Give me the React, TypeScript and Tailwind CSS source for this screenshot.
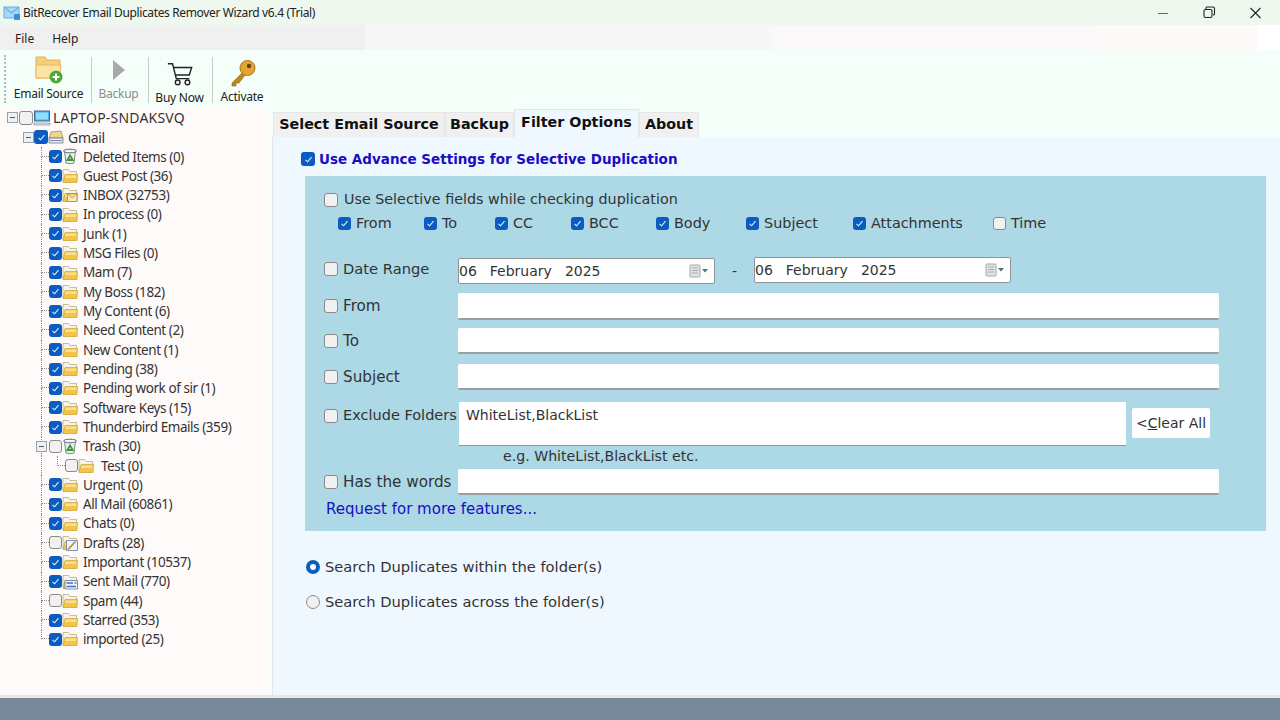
import React from "react";

const sans = "font-['Noto_Sans',sans-serif]";
const dejavu = "font-['DejaVu_Sans',sans-serif]";

function Check({ on, big }: { on?: boolean; big?: boolean }) {
  const size = big ? "w-[14px] h-[14px]" : "w-[13px] h-[13px]";
  if (on) {
    return (
      <span className={`${size} shrink-0 rounded-[3px] bg-[#0b5cc0] flex items-center justify-center`}>
        <svg width="9" height="9" viewBox="0 0 9 9" fill="none" stroke="#e8f0fa" strokeWidth="1.1">
          <path d="M1.5 4.8 L3.6 6.8 L7.5 2.2" />
        </svg>
      </span>
    );
  }
  return <span className={`${size} block shrink-0 rounded-[3px] bg-[#f1f1f1] border-[1.5px] border-[#8a8a8a]`} />;
}

function Folder({ kind }: { kind?: string }) {
  if (kind === "trash") {
    return (
      <svg width="16" height="17" viewBox="0 0 16 17" className="shrink-0">
        <path d="M2.5 3.5 L13.5 2.5 L12 15 Q8 16.5 4 15 Z" fill="#e9eeee" stroke="#7d8a8c" />
        <ellipse cx="8" cy="3" rx="6.5" ry="1.8" fill="#f6f8f8" stroke="#5f6c6e" />
        <path d="M8 7.5 L10.8 12 L5.4 12 Z" fill="none" stroke="#3c9a3a" strokeWidth="1.8" />
      </svg>
    );
  }
  return (
    <svg width="16" height="16" viewBox="0 0 16 16" className="shrink-0">
      <path d="M1 1.5 L6.5 1.5 L8 3.5 L14.5 3.5 L14.5 14 L1 14 Z" fill="#f7f3e6" stroke="#b9ac84" strokeWidth="0.8" />
      <path d="M1 14.5 L3 6.5 L15.5 6.5 L15 14.5 Z" fill="#f3c547" stroke="#c79a2c" strokeWidth="0.6" />
      <path d="M3.5 7.5 L14.5 7.5 L14 10 L3 10 Z" fill="#fae08f" />
      {kind === "inbox" && <path d="M5.5 6.5 L15 6.5 L15 14.5 L5.5 14.5 Z M5.5 6.5 L10.2 11 L15 6.5" fill="#f9ebc0" stroke="#b8842c" strokeWidth="0.8" />}
      {kind === "drafts" && (
        <g>
          <path d="M4.5 5.5 L15.5 5.5 L15.5 15.5 L4.5 15.5 Z" fill="#eef5ff" stroke="#5b7fb5" strokeWidth="0.8" />
          <path d="M6 14.5 L13.5 6.5" stroke="#c88a2a" strokeWidth="1.8" />
        </g>
      )}
      {kind === "sent" && (
        <g>
          <path d="M3 6.5 L15.5 6.5 L15.5 15 L3 15 Z" fill="#f2f6fc" stroke="#5a78ad" strokeWidth="0.8" />
          <path d="M4.5 9 L11 9 M4.5 12.5 L14 12.5" stroke="#3f6fc4" strokeWidth="1.4" />
          <path d="M12.5 8 L14.5 8 L14.5 10 L12.5 10 Z" fill="#d98a3a" />
        </g>
      )}
    </svg>
  );
}

function Connector({ last }: { last?: boolean }) {
  return (
    <span className="w-[8px] self-stretch flex flex-col shrink-0">
      <span className="h-1/2 border-l border-b border-dotted border-[#8d8d8d]" />
      <span className={`h-1/2 ${last ? "" : "border-l border-dotted border-[#8d8d8d]"}`} />
    </span>
  );
}

function Expander() {
  return (
    <span className="w-[11px] h-[11px] shrink-0 border border-[#9aa0a8] bg-[#eef0f3] flex items-center justify-center">
      <span className="w-[5px] h-px bg-[#4a5a78]" />
    </span>
  );
}

type Item = { label: string; on?: boolean; kind?: string; child?: boolean; exp?: boolean };

const items: Item[] = [
  { label: "Deleted Items (0)", on: true, kind: "trash" },
  { label: "Guest Post (36)", on: true },
  { label: "INBOX (32753)", on: true, kind: "inbox" },
  { label: "In process (0)", on: true },
  { label: "Junk (1)", on: true },
  { label: "MSG Files (0)", on: true },
  { label: "Mam (7)", on: true },
  { label: "My Boss (182)", on: true },
  { label: "My Content (6)", on: true },
  { label: "Need Content (2)", on: true },
  { label: "New Content (1)", on: true },
  { label: "Pending (38)", on: true },
  { label: "Pending work of sir (1)", on: true },
  { label: "Software Keys (15)", on: true },
  { label: "Thunderbird Emails (359)", on: true },
  { label: "Trash (30)", kind: "trash", exp: true },
  { label: "Test (0)", child: true },
  { label: "Urgent (0)", on: true },
  { label: "All Mail (60861)", on: true },
  { label: "Chats (0)", on: true },
  { label: "Drafts (28)", kind: "drafts" },
  { label: "Important (10537)", on: true },
  { label: "Sent Mail (770)", on: true, kind: "sent" },
  { label: "Spam (44)" },
  { label: "Starred (353)", on: true },
  { label: "imported (25)", on: true },
];

const treeText = "text-[13.5px] tracking-[-0.44px] text-[#333] whitespace-nowrap";

function TreeRow({ item, last }: { item: Item; last: boolean }) {
  if (item.child) {
    return (
      <div className="h-[19.32px] flex items-center">
        <span className="w-[41px] shrink-0" />
        <span className="w-[16px] shrink-0 self-stretch border-l border-dotted border-[#8d8d8d]" />
        <span className="w-[8px] shrink-0 self-stretch flex flex-col">
          <span className="h-1/2 border-l border-b border-dotted border-[#8d8d8d]" />
        </span>
        <Check />
        <Folder />
        <span className={`ml-[7px] ${treeText}`}>{item.label}</span>
      </div>
    );
  }
  return (
    <div className="h-[19.32px] flex items-center">
      <span className="w-[41px] shrink-0" />
      {item.exp ? (
        <span className="w-[8px] shrink-0 self-stretch flex items-center border-l border-dotted border-[#8d8d8d]">
          <span className="-ml-[6px]"><Expander /></span>
        </span>
      ) : (
        <Connector last={last} />
      )}
      <Check on={item.on} />
      <Folder kind={item.kind} />
      <span className={`ml-[5px] ${treeText}`}>{item.label}</span>
    </div>
  );
}

function Tree() {
  return (
    <div className={`w-[270px] shrink-0 bg-[#fffafa] ${sans}`}>
      <div className="h-[19px] flex items-center pl-[7px]">
        <Expander />
        <span className="ml-[1px]"><Check big /></span>
        <svg width="18" height="16" viewBox="0 0 18 16" className="shrink-0">
          <rect x="1.5" y="1" width="15" height="10" fill="#3fb6ee" stroke="#44668a" />
          <rect x="3" y="2.5" width="12" height="7" fill="#8fdcfb" />
          <path d="M1 13 L17 13 L17 15 L1 15 Z" fill="#dfe6ee" stroke="#7d8ea3" strokeWidth="0.7" />
        </svg>
        <span className="ml-[2px] text-[14px] tracking-[0.2px] text-[#333]">LAPTOP-SNDAKSVQ</span>
      </div>
      <div className="h-[20px] flex items-center pl-[23px]">
        <Expander />
        <Check on big />
        <svg width="16" height="16" viewBox="0 0 16 16" className="shrink-0">
          <path d="M3 3 L13 2 L15 9 L1 9 Z" fill="#f0d591" stroke="#a98b4f" strokeWidth="0.8" />
          <path d="M1 9 L15 9 L15 14 L1 14 Z" fill="#e9edf2" stroke="#69778a" strokeWidth="0.8" />
          <path d="M2 11.5 L14 11.5" stroke="#7d8ea3" />
        </svg>
        <span className="ml-[4px] text-[14px] tracking-[-0.3px] text-[#333]">Gmail</span>
      </div>
      {items.map((it, i) => (
        <TreeRow key={it.label} item={it} last={i === items.length - 1} />
      ))}
    </div>
  );
}

function ToolBtn({ label, w, gray, top, children }: { label: string; w: string; gray?: boolean; top: string; children: React.ReactNode }) {
  return (
    <div className={`${w} shrink-0 flex flex-col items-center ${top}`}>
      <div className="h-[30px] flex items-center justify-center">{children}</div>
      <span className={`text-[12px] leading-[17px] tracking-[-0.25px] whitespace-nowrap ${gray ? "text-[#8b8b8b]" : "text-[#222]"}`}>{label}</span>
    </div>
  );
}

function Sep() {
  return <span className="w-px h-[46px] mt-[7px] bg-[#c4cbc8] shrink-0" />;
}

function Toolbar() {
  return (
    <div className={`h-[58px] bg-[#f5fffa] flex items-stretch ${sans}`}>
      <span className="ml-[4px] my-[5px] w-px border-l-2 border-dotted border-[#b5bbb8]" />
      <ToolBtn label="Email Source" w="w-[85px]" top="pt-[5px]">
        <svg width="30" height="30" viewBox="0 0 30 30">
          <path d="M2 2 L11 2 L13 5 L26 5 L26 23 L2 23 Z" fill="#f6cf7a" stroke="#e0b050" />
          <path d="M2 23 L2 10 L27 10 L26 23 Z" fill="#fce3a6" stroke="#e6bb60" />
          <circle cx="22" cy="22" r="6.5" fill="#4da83a" />
          <path d="M22 18.5 L22 25.5 M18.5 22 L25.5 22" stroke="#fff" strokeWidth="2" />
        </svg>
      </ToolBtn>
      <Sep />
      <ToolBtn label="Backup" w="w-[56px] pr-[3px]" gray top="pt-[5px]">
        <svg width="16" height="24" viewBox="0 0 16 24">
          <path d="M2 2 L14 12 L2 22 Z" fill="#a9a9a9" />
        </svg>
      </ToolBtn>
      <Sep />
      <ToolBtn label="Buy Now" w="w-[63px] pr-[2px]" top="pt-[9px]">
        <svg width="28" height="28" viewBox="0 0 30 28" fill="none" stroke="#222" strokeWidth="1.5">
          <path d="M2 3 L7 3 L11 19 L25 19" />
          <path d="M8 7 L27.5 7 L25 15 L10 15" />
          <circle cx="12.5" cy="23" r="2.5" />
          <circle cx="23" cy="23" r="2.5" />
        </svg>
      </ToolBtn>
      <Sep />
      <ToolBtn label="Activate" w="w-[58px]" top="pt-[8px]">
        <svg width="28" height="28" viewBox="0 0 28 28" className="ml-[2px]">
          <path d="M14 13 L3 24 L3 27 L7 27 L7 24 L10 24 L16 16" fill="#b98a1f" stroke="#8a6414" strokeWidth="0.6" />
          <circle cx="18.5" cy="9" r="7.5" fill="#e3a62a" stroke="#a8761a" />
          <circle cx="20" cy="7" r="2.2" fill="#5e4410" />
        </svg>
      </ToolBtn>
    </div>
  );
}

function Tab({ label, active, w }: { label: string; active?: boolean; w: string }) {
  return (
    <div
      className={`${w} shrink-0 flex items-center justify-center ${dejavu} font-bold text-[14.3px] text-[#111] border-t border-x whitespace-nowrap ${
        active ? "h-[28px] bg-[#f0f8ff] border-[#e2e6e6] pb-[1px]" : "h-[25px] bg-[#f0f0f0] border-[#e6e6e6]"
      }`}
    >
      {label}
    </div>
  );
}

const label = `${dejavu} text-[#333] whitespace-nowrap`;

function Calendar() {
  return (
    <svg width="24" height="14" viewBox="0 0 24 14" className="shrink-0">
      <rect x="1" y="1" width="10" height="12" rx="1" fill="#dfe3e3" stroke="#a2a8a8" />
      <path d="M3 4 L9 4 M3 6.5 L9 6.5 M3 9 L9 9" stroke="#a8aeae" />
      <path d="M13 5 L19 5 L16 8.5 Z" fill="#5a6a86" />
    </svg>
  );
}

function DateBox({ up }: { up?: boolean }) {
  return (
    <div className={`w-[257px] h-[26px] ${up ? "mb-[2px]" : ""} bg-white rounded-[2px] border border-[#8e9498] flex items-center pr-[1px] justify-between ${dejavu} text-[14px] text-[#333]`}>
      <span className="flex gap-[13px]">
        <span>06</span>
        <span>February</span>
        <span>2025</span>
      </span>
      <Calendar />
    </div>
  );
}

function TextInput({ h = "h-[27px]" }: { h?: string }) {
  return <div className={`w-[761px] ${h} bg-white rounded-[2px] border-b-2 border-[#9a9fa3]`} />;
}

function FieldRow({ text, mt, size = "text-[15.2px]", lift, children }: { text: string; mt: string; size?: string; lift?: boolean; children: React.ReactNode }) {
  return (
    <div className={`flex items-center ${mt}`}>
      <div className={`flex items-center shrink-0 ${lift ? "mb-[3px]" : ""}`}>
        <span className="w-[19px] ml-[19px] shrink-0 flex"><Check big /></span>
        <span className={`${label} ${size} w-[115px] shrink-0`}>{text}</span>
      </div>
      {children}
    </div>
  );
}

function SubCheck({ text, w }: { text: string; w: string }) {
  return (
    <div className={`${w} flex items-center shrink-0`}>
      <Check on={text !== "Time"} />
      <span className={`${label} text-[14.4px] ml-[5px]`}>{text}</span>
    </div>
  );
}

function Radio({ on }: { on?: boolean }) {
  return on ? (
    <span className="w-[14px] h-[14px] rounded-full bg-[#0b5cc0] flex items-center justify-center shrink-0">
      <span className="w-[6px] h-[6px] rounded-full bg-white" />
    </span>
  ) : (
    <span className="w-[14px] h-[14px] block rounded-full bg-[#f0f0f0] border border-[#8a8a8a] shrink-0" />
  );
}

function Pane() {
  return (
    <div className="flex-1 ml-[2px] flex flex-col">
      <div className="h-[29px] bg-[#f5fffa] flex items-end pl-[1px]">
        <Tab label="Select Email Source" w="w-[172px]" />
        <Tab label="Backup" w="w-[69px]" />
        <Tab label="Filter Options" active w="w-[125px]" />
        <Tab label="About" w="w-[60px]" />
      </div>
      <div className="flex-1 bg-[#f0f8ff] pl-[32px] pr-[14px] border-l border-[#e0e4e6]">
        <div className="h-[39px] pt-[5px] flex items-center -ml-[4px]">
          <Check on big />
          <span className={`ml-[4px] ${dejavu} font-bold text-[13.5px] text-[#1a0dc4] whitespace-nowrap`}>
            Use Advance Settings for Selective Duplication
          </span>
        </div>
        <div className="bg-[#add8e6] h-[355px] pt-[12px]">
          <div className="h-[24px] flex items-center pl-[19px]">
            <Check big />
            <span className={`${label} text-[14.3px] ml-[6px]`}>Use Selective fields while checking duplication</span>
          </div>
          <div className="h-[24px] flex items-center pl-[33px]">
            <SubCheck text="From" w="w-[86px]" />
            <SubCheck text="To" w="w-[71px]" />
            <SubCheck text="CC" w="w-[76px]" />
            <SubCheck text="BCC" w="w-[85px]" />
            <SubCheck text="Body" w="w-[90px]" />
            <SubCheck text="Subject" w="w-[107px]" />
            <SubCheck text="Attachments" w="w-[140px]" />
            <SubCheck text="Time" w="w-[60px]" />
          </div>
          <FieldRow text="Date Range" mt="mt-[21px]" size="text-[14.7px]" lift>
            <DateBox />
            <span className={`${label} text-[14px] w-[39px] text-center`}>-</span>
            <DateBox up />
          </FieldRow>
          <FieldRow text="From" mt="mt-[8px]"><TextInput /></FieldRow>
          <FieldRow text="To" mt="mt-[8px]"><TextInput h="h-[26px]" /></FieldRow>
          <FieldRow text="Subject" mt="mt-[10px]"><TextInput h="h-[26px]" /></FieldRow>
          <div className="flex items-start mt-[12px]">
            <div className="h-[28px] flex items-center shrink-0">
              <span className="w-[19px] ml-[19px] shrink-0 flex"><Check big /></span>
              <span className={`${label} text-[14.5px] w-[115px] shrink-0`}>Exclude Folders</span>
            </div>
            <div className="w-[667px] h-[44px] ml-[1px] bg-white border-b border-[#8f9497] pl-[7px]">
              <span className={`${label} text-[14px]`}>WhiteList,BlackList</span>
            </div>
            <div className={`ml-[6px] mt-[6px] w-[78px] h-[30px] bg-white rounded-[2px] flex items-center justify-center ${label} text-[14px]`}>
              &lt;<span className="underline">C</span>lear All
            </div>
          </div>
          <div className={`h-[19px] mt-[1px] pl-[198px] flex items-center ${label} text-[14.15px]`}>e.g. WhiteList,BlackList etc.</div>
          <FieldRow text="Has the words" mt="mt-[3px]"><TextInput h="h-[26px]" /></FieldRow>
          <div className={`h-[20px] mt-[4px] pt-[1px] pl-[21px] flex items-center ${dejavu} text-[15px] text-[#1a0dc4]`}>
            Request for more features...
          </div>
        </div>
        <div className="mt-[26px] ml-[1px] h-[20px] flex items-center">
          <Radio on />
          <span className={`${label} text-[14.7px] ml-[5px]`}>Search Duplicates within the folder(s)</span>
        </div>
        <div className="mt-[15px] ml-[1px] h-[20px] flex items-center">
          <Radio />
          <span className={`${label} text-[14.7px] ml-[5px]`}>Search Duplicates across the folder(s)</span>
        </div>
      </div>
    </div>
  );
}

export default function App() {
  return (
    <div className="w-[1280px] h-[720px] overflow-hidden flex flex-col bg-[#f5fffa]">
      <div className={`h-[25px] bg-[#eff8ef] flex items-center pl-[3px] ${sans}`}>
        <svg width="18" height="16" viewBox="0 0 18 16" className="shrink-0">
          <path d="M1 2 L16 2 L16 13 L1 13 Z" fill="#a8d6f5" stroke="#62aee6" />
          <path d="M1 2 L8.5 8 L16 2" fill="none" stroke="#4f9fdc" />
          <rect x="11" y="9" width="6" height="6" rx="1" fill="#3b8fd6" />
        </svg>
        <span className="ml-[2px] text-[12px] tracking-[-0.36px] text-[#222] whitespace-nowrap">BitRecover Email Duplicates Remover Wizard v6.4 (Trial)</span>
        <div className="ml-auto flex items-center">
          <svg width="46" height="24" viewBox="0 0 46 24" stroke="#666" fill="none"><path d="M18 12.5 L28 12.5" /></svg>
          <svg width="46" height="24" viewBox="0 0 46 24" stroke="#222" fill="none" strokeWidth="1.1">
            <rect x="18" y="8.5" width="8" height="8" rx="1.5" />
            <path d="M20 8 L20 7 Q20 6 21 6 L27 6 Q28.5 6 28.5 7.5 L28.5 13 Q28.5 14 27 14" />
          </svg>
          <svg width="46" height="24" viewBox="0 0 46 24" stroke="#222" fill="none" strokeWidth="1.1" className="ml-[1px] mr-[1px]"><path d="M17.5 7 L27.5 17 M27.5 7 L17.5 17" /></svg>
        </div>
      </div>
      <div className={`h-[25px] flex items-stretch ${sans}`}>
        <div className="w-[365px] bg-[#f0f0f0] flex items-center pl-[15px] pt-[2px] gap-[18px] text-[12px] text-[#222]">
          <span>File</span>
          <span>Help</span>
        </div>
        <div className="w-[405px] bg-[#f7f7f7]" />
        <div className="w-[325px] bg-[#faf8f8]" />
        <div className="w-[162px] bg-[#fdf9f9]" />
        <div className="flex-1 bg-white" />
      </div>
      <Toolbar />
      <div className="flex-1 flex min-h-0">
        <Tree />
        <Pane />
      </div>
      <div className="h-[3px] bg-[#e6e6e6] shrink-0" />
      <div className="h-[22px] bg-[#778899] shrink-0" />
    </div>
  );
}
